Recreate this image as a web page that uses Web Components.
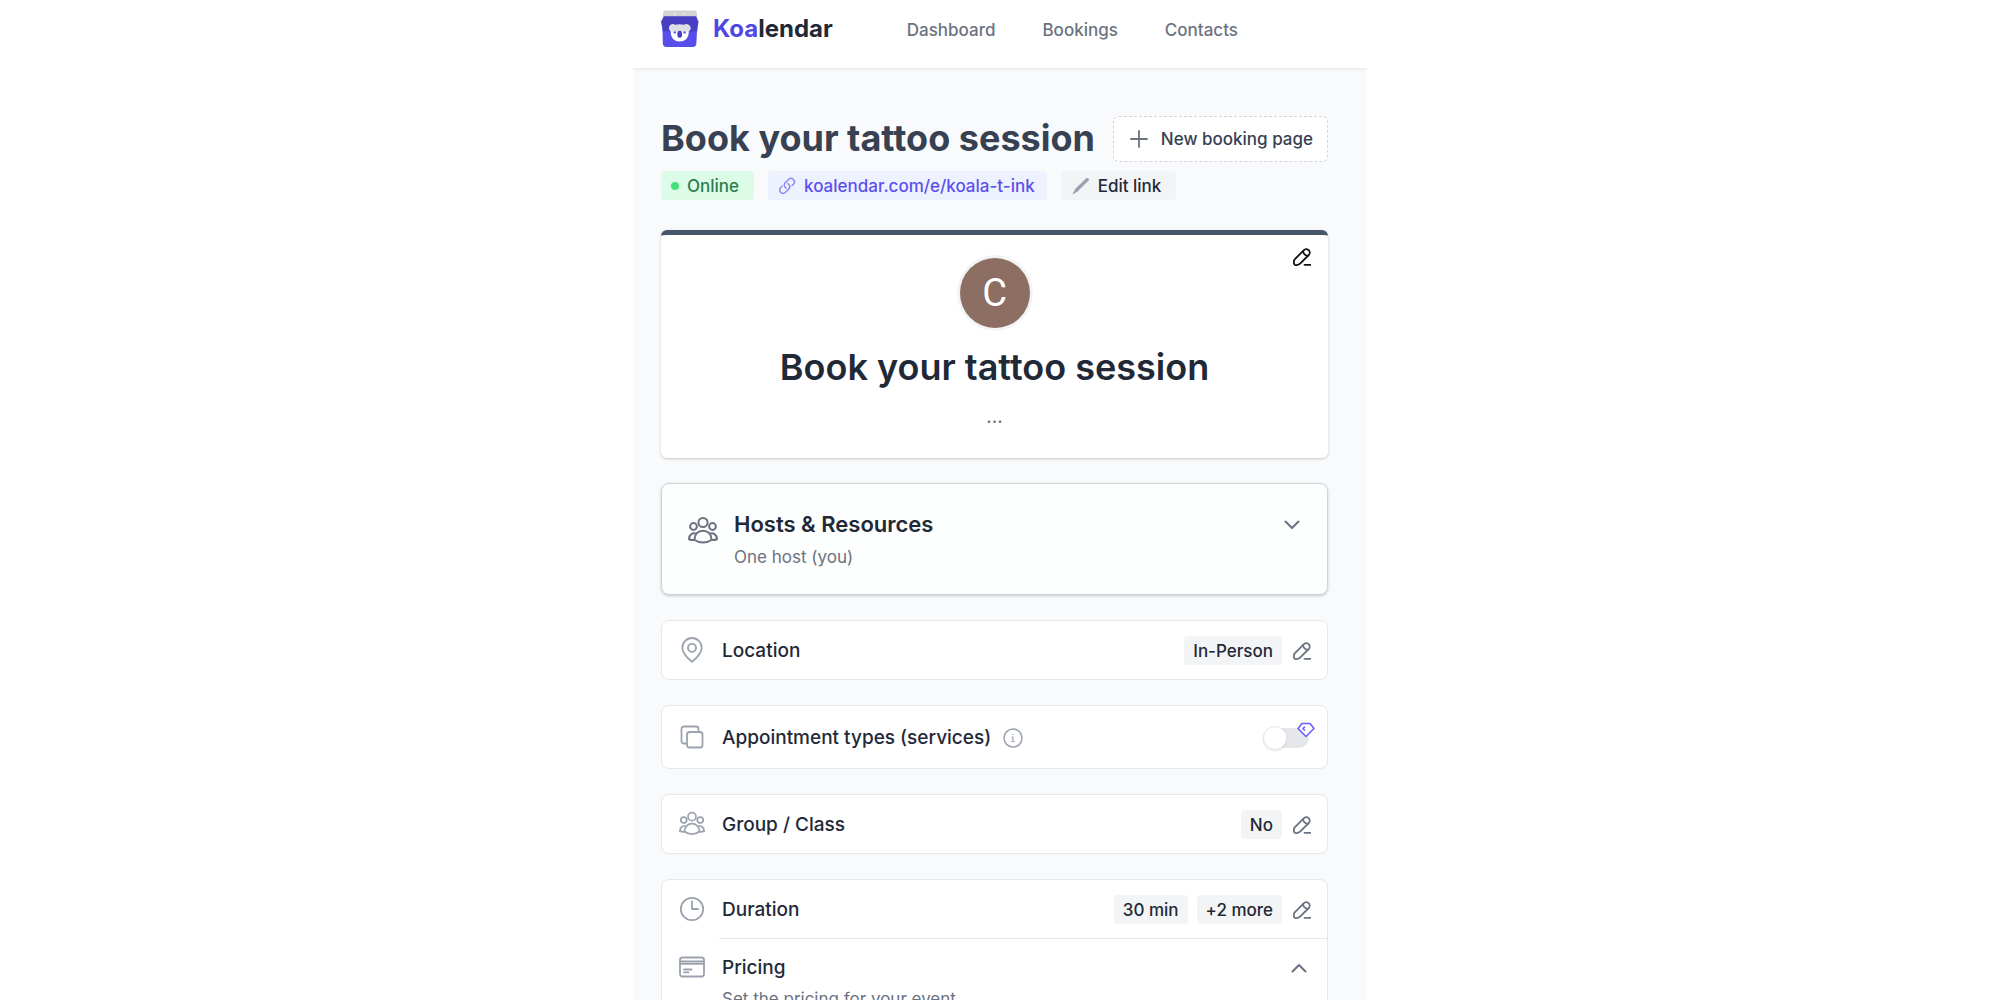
<!DOCTYPE html>
<html lang="en">
<head>
<meta charset="utf-8">
<meta name="viewport" content="width=device-width, initial-scale=1">
<title>Koalendar</title>
<style>
  :root {
    --indigo: #4f46e5;
    --gray-50: #f9fafb;
    --gray-100: #f3f4f6;
    --gray-200: #e5e7eb;
    --gray-300: #d1d5db;
    --gray-400: #9ca3af;
    --gray-500: #6b7280;
    --gray-700: #374151;
    --gray-800: #1f2937;
  }
  * { box-sizing: border-box; }
  body {
    margin: 0;
    height: 100vh;
    overflow: hidden;
    background: #fff;
    color: var(--gray-800);
    font-family: Inter, "Liberation Sans", sans-serif;
    font-size: 17px;
    font-feature-settings: "calt" 0;
    line-height: 24px;
  }
</style>
</head>
<body>
<booking-app></booking-app>

<script>
const ICONS = {
  plus: `<svg viewBox="0 0 18 18" stroke-width="1.8"><path d="M9 1v16M1 9h16"/></svg>`,
  link: `<svg viewBox="0 0 24 24" stroke-width="1.9"><path d="M13.2 8.7a4.5 4.5 0 0 1 1.2 7.2l-4.5 4.5a4.5 4.5 0 0 1-6.4-6.4l1.8-1.7m13.4-1 1.8-1.7a4.5 4.5 0 0 0-6.4-6.4L9.6 7.7a4.5 4.5 0 0 0 1.2 7.2"/></svg>`,
  pencil: `<svg viewBox="0 0 18 18" class="solid"><path fill="currentColor" d="M14.2 1.3c1.5-1.2 3.6.7 2.5 2.3L5.8 14.2 1.6 16.9c-.7.4-1 .1-.7-.6L3.3 11.8Z"/></svg>`,
  edit: `<svg viewBox="0 0 18 18" stroke-width="1.8"><path d="M10.7 2.3a3.3 3.3 0 0 1 5.1 4.7L7.1 15.7c-1 1-3.9 1.9-5.4 1C.3 15.3.8 12.3 1.7 11.3Z"/><path d="M10 3.2c.4 2.5 2.2 4.3 4.7 4.7"/><path d="M11.5 16.8h6"/></svg>`,
  down: `<svg viewBox="0 0 18 18" stroke-width="2"><path d="m2.500 5.500 6.500 6.500 6.500-6.500"/></svg>`,
  up: `<svg viewBox="0 0 18 18" stroke-width="2"><path d="m2.500 12.500 6.500-6.500 6.500 6.500"/></svg>`,
  group: `<svg viewBox="0 0 30 30" stroke-width="2"><circle cx="15" cy="6.5" r="4.6"/><circle cx="5.5" cy="10.5" r="3.4"/><circle cx="24.5" cy="10.5" r="3.4"/><path d="M15 14.7c-4.7 0-8.6 3.3-8.6 9 5 3.8 12.2 3.8 17.2 0 0-5.7-3.900-9-8.600-9ZM8.300 17.600C4.600 16.600 1.300 18.300 1 23.200c1.800.7 3.600.9 5.400.7M21.700 17.600c3.700-1 7 .7 7.300 5.600-1.800.7-3.600.9-5.400.7"/></svg>`,
  pin: `<svg viewBox="0 0 26 26" stroke-width="1.8"><path d="M13 24.8C9 21.5 3.3 16.5 3.3 10.7a9.7 9.7 0 0 1 19.4 0C22.7 16.5 17 21.5 13 24.8Z"/><circle cx="13" cy="10.8" r="4"/></svg>`,
  copy: `<svg viewBox="0 0 26 26" stroke-width="1.8"><rect x="8" y="8" width="15.5" height="15.5" rx="2.5"/><path d="M8 19.5H5A2.5 2.5 0 0 1 2.5 17V5A2.5 2.5 0 0 1 5 2.5h12A2.5 2.5 0 0 1 19.5 5v3"/></svg>`,
  info: `<svg viewBox="0 0 20 20" stroke-width="1.5"><circle cx="10" cy="10" r="9"/><path stroke-width="1.2" d="M9 9h1v4.500M8.800 13.500h2.400M10 6.400v.3"/></svg>`,
  clock: `<svg viewBox="0 0 26 26" stroke-width="1.8"><circle cx="13" cy="13" r="11.2"/><path d="M13 5.5V13h6"/></svg>`,
  card: `<svg viewBox="0 0 26 26" stroke-width="1.8"><rect x="1" y="3.5" width="24" height="19" rx="2.5"/><path d="M1 7.5h24M1 9.8h24M5 15.5h7.500M5 18.300h4.500"/></svg>`,
  gem: `<svg viewBox="0 0 18 16" stroke-width="1.6"><path fill="#fff" d="M5 1.5h8l4 5L9 14.5 1 6.5Z"/><path d="M7.5 5 6 6.7l1.5 1.5"/></svg>`,
  logo: `<svg viewBox="0 0 39 38" class="solid"><path fill="#d1d3d4" d="M5 0h29q3 0 3 3v6H2V3q0-3 3-3Z"/><path fill="#584eea" d="M1.5 18h35.6L36.3 34q-.2 3.5-3.7 3.5H5.4Q2 37.5 1.9 34Z"/><path fill="#493fc3" d="M3 6h33l2.5 5.5-1.5 10H2L0 11.5Z"/><path fill="#fff" d="M10 20h18.5c.5 7.5-3 11.8-9.3 11.8S9.500 27.500 10 20Z"/><path fill="#dedfe5" d="M11 14q2-.5 3.500.7 4.500-1.400 9.200 0Q26 13.300 28 14.300c3.400 1.700 3.400 6.200-.2 7.200H10.600C7.300 20 7.300 15.300 11 14Z"/><rect fill="#493fc3" x="16.8" y="20.8" width="4.8" height="7.2" rx="2.4"/><circle fill="#584eea" cx="14.2" cy="22.5" r="1.2"/><circle fill="#584eea" cx="24.2" cy="22.5" r="1.2"/><circle fill="#f1f1f1" cx="14" cy="3.5" r="1"/><circle fill="#f1f1f1" cx="24" cy="3.5" r="1"/></svg>`,
};

class UiIcon extends HTMLElement {
  constructor() {
    super();
    this.attachShadow({mode: "open"});
  }
  connectedCallback() {
    this.shadowRoot.innerHTML = `
    <style>
      :host {
        display: block;
        flex: none;
        width: var(--icon-size, 18px);
        height: var(--icon-size, 18px);
      }
      svg {
        display: block;
        width: 100%;
        height: 100%;
        fill: none;
        stroke: currentColor;
        stroke-linecap: round;
        stroke-linejoin: round;
      }
      svg.solid { stroke: none; }
    </style>
    ${ICONS[this.getAttribute("name")]}
    `;
    this.shadowRoot.querySelector("svg").setAttribute("aria-hidden", "true");
  }
}
customElements.define("ui-icon", UiIcon);

/* Small rounded label */
class UiChip extends HTMLElement {
  constructor() {
    super();
    this.attachShadow({mode: "open"});
    this.shadowRoot.innerHTML = `
    <style>
      :host {
        display: flex;
        align-items: center;
        gap: 8px;
        box-sizing: border-box;
        height: 29px;
        padding: 0 9px;
        border-radius: 4px;
        background: var(--gray-100);
        color: var(--gray-800);
        font-weight: 500;
        white-space: nowrap;
      }
    </style>
    <slot></slot>
    `;
  }
}
customElements.define("ui-chip", UiChip);

/* Borderless button around one icon */
class IconButton extends HTMLElement {
  constructor() {
    super();
    this.attachShadow({mode: "open"});
  }
  connectedCallback() {
    this.shadowRoot.innerHTML = `
    <style>
      :host { display: block; flex: none; color: var(--gray-500); }
      button {
        display: block;
        margin: 0;
        padding: 0;
        border: 0;
        background: none;
        color: inherit;
        cursor: pointer;
      }
    </style>
    <button type="button" aria-label="${this.getAttribute("label")}">
      <ui-icon name="${this.getAttribute("icon")}"></ui-icon>
    </button>
    `;
  }
}
customElements.define("icon-button", IconButton);

class ProToggle extends HTMLElement {
  constructor() {
    super();
    this.attachShadow({mode: "open"});
  }
  connectedCallback() {
    this.shadowRoot.innerHTML = `
    <style>
      :host { display: block; position: relative; width: 46px; height: 24px; }
      label { display: flex; align-items: center; height: 24px; }
      input {
        appearance: none;
        display: flex;
        align-items: center;
        width: 46px;
        height: 20px;
        margin: 0;
        border-radius: 10px;
        background: var(--gray-200);
      }
      input::before {
        content: "";
        box-sizing: border-box;
        width: 24px;
        height: 24px;
        border: 1px solid var(--gray-200);
        border-radius: 50%;
        background: #fff;
        box-shadow: 0 1px 2px rgba(0, 0, 0, 0.1);
      }
      input:checked { justify-content: flex-end; background: var(--indigo); }
      /* Paid feature badge */
      ui-icon {
        --icon-size: 18px;
        position: absolute;
        top: -5px;
        right: -6px;
        color: #6d5ff5;
      }
    </style>
    <label><input type="checkbox" role="switch" aria-label="${this.getAttribute("label")}"></label>
    <ui-icon name="gem"></ui-icon>
    `;
  }
}
customElements.define("pro-toggle", ProToggle);

class SiteHeader extends HTMLElement {
  constructor() {
    super();
    this.attachShadow({mode: "open"});
    this.shadowRoot.innerHTML = `
    <style>
      :host {
        display: flex;
        align-items: flex-start;
        gap: 74px;
        box-sizing: border-box;
        height: 68px;
        padding: 10px 28px 0;
        background: #fff;
        box-shadow: 0 1px 3px rgba(0, 0, 0, 0.09);
        clip-path: inset(0 0 -6px 0);
      }
      a { color: inherit; text-decoration: none; }
      .brand {
        display: flex;
        align-items: center;
        gap: 14px;
        height: 38px;
        font-size: 24px;
        font-weight: 700;
      }
      .brand ui-icon { --icon-size: 38px; }
      .brand b { color: var(--indigo); font-weight: 700; }
      nav {
        display: flex;
        align-items: center;
        gap: 47px;
        height: 40px;
        color: var(--gray-500);
        font-weight: 500;
      }
    </style>
    <a class="brand" href="#">
      <ui-icon name="logo"></ui-icon>
      <span><b>Koa</b>lendar</span>
    </a>
    <nav>
      <a href="#dashboard">Dashboard</a>
      <a href="#bookings">Bookings</a>
      <a href="#contacts">Contacts</a>
    </nav>
    `;
  }
}
customElements.define("site-header", SiteHeader);

class PageTitle extends HTMLElement {
  constructor() {
    super();
    this.attachShadow({mode: "open"});
    this.shadowRoot.innerHTML = `
    <style>
      :host { display: block; }
      .top {
        display: flex;
        align-items: flex-start;
        justify-content: space-between;
      }
      h1 {
        margin: 0;
        color: var(--gray-700);
        font-size: 36px;
        line-height: 44px;
        font-weight: 700;
        white-space: nowrap;
      }
      button {
        display: flex;
        align-items: center;
        gap: 13px;
        height: 46px;
        padding: 0 14px 0 16px;
        border: 1px dashed var(--gray-300);
        border-radius: 6px;
        background: #fff;
        color: var(--gray-700);
        font: inherit;
        font-weight: 500;
        white-space: nowrap;
      }
      button ui-icon { color: var(--gray-500); }
      .chips { display: flex; gap: 14px; margin-top: 9px; }
      a { color: inherit; text-decoration: none; }
      .online { padding: 0 15px 0 10px; background: #dcfce7; color: #2f7d4f; }
      .dot {
        width: 8px;
        height: 8px;
        border-radius: 50%;
        background: #4ade80;
      }
      .url { padding: 0 12px 0 10px; background: #eef2ff; color: #5b50ee; }
      .url ui-icon { color: #8b83f3; }
      .edit { padding: 0 15px 0 11px; }
      .edit ui-icon { color: var(--gray-400); }
    </style>
    <div class="top">
      <h1><slot></slot></h1>
      <button type="button"><ui-icon name="plus"></ui-icon>New booking page</button>
    </div>
    <div class="chips">
      <ui-chip class="online"><span class="dot"></span>Online</ui-chip>
      <ui-chip class="url"><ui-icon name="link"></ui-icon><a href="#page">koalendar.com/e/koala-t-ink</a></ui-chip>
      <ui-chip class="edit"><ui-icon name="pencil"></ui-icon><a href="#edit">Edit link</a></ui-chip>
    </div>
    `;
  }
}
customElements.define("page-title", PageTitle);

/* Preview of the public page */
class PreviewCard extends HTMLElement {
  constructor() {
    super();
    this.attachShadow({mode: "open"});
    this.shadowRoot.innerHTML = `
    <style>
      :host {
        display: flex;
        flex-direction: column;
        align-items: center;
        box-sizing: border-box;
        position: relative;
        padding: 23px 16px 29px;
        border-top: 5px solid #475569;
        border-radius: 6px;
        background: #fff;
        box-shadow: 0 1px 3px rgba(0, 0, 0, 0.2);
      }
      icon-button {
        position: absolute;
        top: 13px;
        right: 17px;
        color: #111;
      }
      .avatar {
        display: flex;
        align-items: center;
        justify-content: center;
        width: 70px;
        height: 70px;
        border-radius: 50%;
        background: #8d6e63;
        box-shadow: 0 0 0 3px var(--gray-100);
        color: #fff;
        font-family: Roboto, sans-serif;
        font-size: 38px;
        line-height: 44px;
      }
      h2 {
        margin: 17px 0 0;
        font-size: 36px;
        line-height: 44px;
        font-weight: 600;
      }
      p {
        margin: 16px 0 0;
        color: var(--gray-500);
        font-size: 19px;
        line-height: 24px;
      }
    </style>
    <icon-button icon="edit" label="Edit page details"></icon-button>
    <div class="avatar">C</div>
    <h2><slot></slot></h2>
    <p><slot name="description"></slot></p>
    `;
  }
}
customElements.define("preview-card", PreviewCard);

/* White box that holds one or more rows */
class SettingsCard extends HTMLElement {
  constructor() {
    super();
    this.attachShadow({mode: "open"});
    this.shadowRoot.innerHTML = `
    <style>
      :host {
        display: block;
        box-sizing: border-box;
        border: 1px solid var(--gray-200);
        border-radius: 8px;
        background: #fff;
      }
      :host([raised]) {
        border-color: var(--gray-300);
        background: #fdfefe;
        box-shadow: 0 1px 3px rgba(0, 0, 0, 0.2);
      }
    </style>
    <slot></slot>
    `;
  }
}
customElements.define("settings-card", SettingsCard);

class SettingsRow extends HTMLElement {
  constructor() {
    super();
    this.attachShadow({mode: "open"});
  }
  connectedCallback() {
    this.shadowRoot.innerHTML = `
    <style>
      :host {
        display: flex;
        align-items: flex-start;
        gap: 17px;
        box-sizing: border-box;
        padding: 15px 16px 14px 17px;
      }
      :host([large]) { gap: 16px; padding: 26px 26px 25px; }
      :host([tall]) { padding-top: 17px; padding-bottom: 16px; }
      :host([expanded]) { padding-top: 14px; padding-right: 19px; }
      .icon {
        --icon-size: 26px;
        margin-top: 1px;
        color: var(--gray-400);
      }
      :host([large]) .icon {
        --icon-size: 30px;
        margin-top: 6px;
        color: var(--gray-500);
      }
      .text { flex: 1; }
      h3 {
        display: flex;
        align-items: center;
        gap: 12px;
        margin: 0;
        font-size: 19px;
        line-height: 29px;
        font-weight: 500;
      }
      :host([large]) h3 { font-size: 22px; font-weight: 600; }
      p {
        margin: 5px 0 0;
        color: var(--gray-500);
        line-height: 24px;
      }
      :host([large]) p { margin-top: 6px; }
      .end { display: flex; align-items: center; gap: 9px; height: 29px; }
    </style>
    <ui-icon class="icon" name="${this.getAttribute("icon")}"></ui-icon>
    <div class="text">
      <h3><slot></slot></h3>
      ${this.hasAttribute("note") ? `<p>${this.getAttribute("note")}</p>` : ""}
    </div>
    <div class="end"><slot name="end"></slot></div>
    `;
  }
}
customElements.define("settings-row", SettingsRow);

class BookingApp extends HTMLElement {
  constructor() {
    super();
    this.attachShadow({mode: "open"});
    this.shadowRoot.innerHTML = `
    <style>
      :host {
        display: block;
        max-width: 734px;
        min-height: 100vh;
        margin: 0 auto;
        background: #f8fafc;
      }
      main {
        display: flex;
        flex-direction: column;
        gap: 25px;
        padding: 48px 39px 48px 28px;
      }
      preview-card { margin-top: 5px; }
      .info { --icon-size: 20px; color: var(--gray-400); }
      hr {
        height: 1px;
        margin: 0 0 0 57px;
        border: 0;
        background: var(--gray-200);
      }
      .end { display: flex; align-items: center; gap: 9px; }
      .end icon-button { margin-left: 2px; }
      pro-toggle { margin-right: 2px; }
    </style>
    <site-header></site-header>
    <main>
      <page-title>Book your tattoo session</page-title>
      <preview-card>
        Book your tattoo session
        <span slot="description">...</span>
      </preview-card>
      <settings-card raised>
        <settings-row large icon="group" note="One host (you)">
          Hosts &amp; Resources
          <icon-button slot="end" icon="down" label="Expand hosts"></icon-button>
        </settings-row>
      </settings-card>
      <settings-card>
        <settings-row icon="pin">
          Location
          <div class="end" slot="end">
            <ui-chip>In-Person</ui-chip>
            <icon-button icon="edit" label="Edit location"></icon-button>
          </div>
        </settings-row>
      </settings-card>
      <settings-card>
        <settings-row tall icon="copy">
          Appointment types (services)
          <ui-icon class="info" name="info"></ui-icon>
          <pro-toggle slot="end" label="Appointment types"></pro-toggle>
        </settings-row>
      </settings-card>
      <settings-card>
        <settings-row icon="group">
          Group / Class
          <div class="end" slot="end">
            <ui-chip>No</ui-chip>
            <icon-button icon="edit" label="Edit group size"></icon-button>
          </div>
        </settings-row>
      </settings-card>
      <settings-card>
        <settings-row icon="clock">
          Duration
          <div class="end" slot="end">
            <ui-chip>30 min</ui-chip>
            <ui-chip>+2 more</ui-chip>
            <icon-button icon="edit" label="Edit duration"></icon-button>
          </div>
        </settings-row>
        <hr>
        <settings-row expanded icon="card" note="Set the pricing for your event">
          Pricing
          <icon-button slot="end" icon="up" label="Collapse pricing"></icon-button>
        </settings-row>
      </settings-card>
    </main>
    `;
  }
}
customElements.define("booking-app", BookingApp);
</script>
</body>
</html>
